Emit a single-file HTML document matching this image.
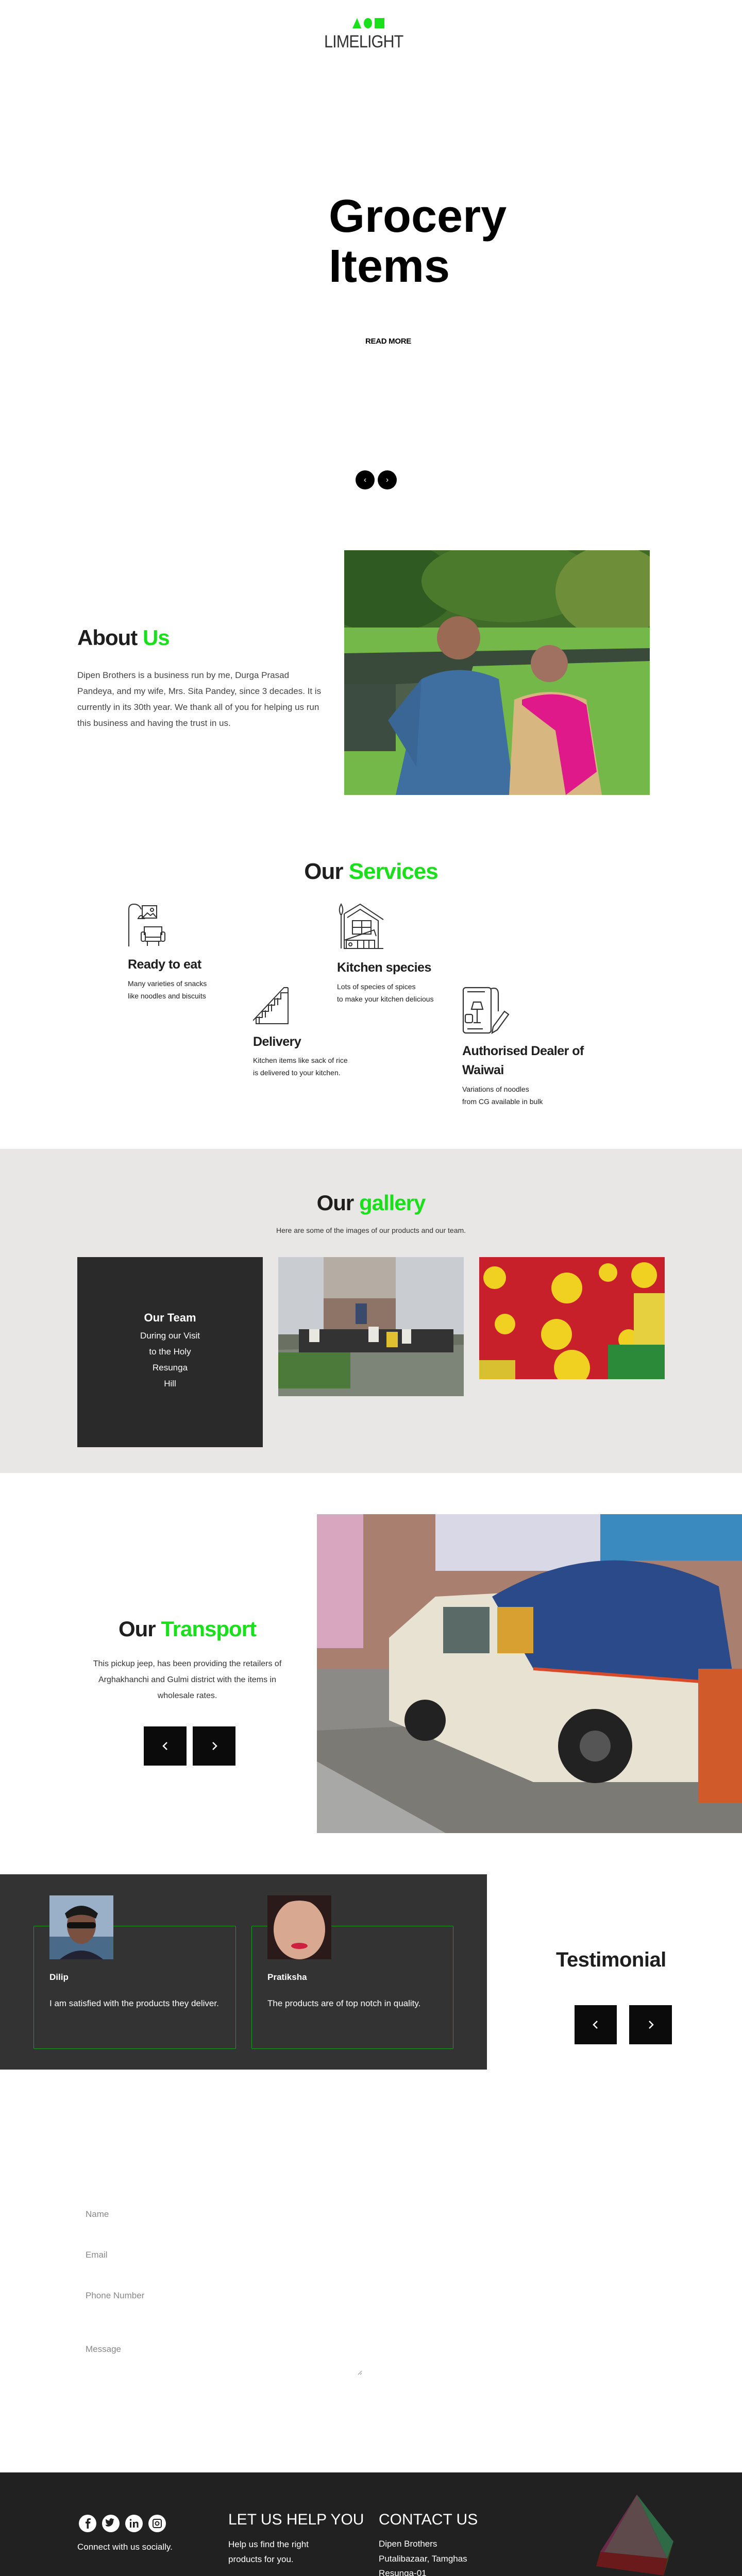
<!DOCTYPE html>
<html><head><meta charset="utf-8">
<style>
*{margin:0;padding:0;box-sizing:border-box}
html,body{width:1440px;height:5162px;overflow:hidden}
body{position:relative;background:#fff;font-family:"Liberation Sans",sans-serif;color:#222}
.a{position:absolute}
.g{color:#19e01a}
.h{font-weight:bold;color:#1e1e1e}
.btn{position:absolute;background:#0b0b0b;color:#fff;display:flex;align-items:center;justify-content:center}
</style></head><body>

<!-- logo -->
<svg class="a" style="left:684px;top:34px" width="62" height="22" viewBox="0 0 62 22">
<polygon points="0,21 9,1 17,21" fill="#19e01a"/>
<ellipse cx="30" cy="11" rx="8" ry="10" fill="#19e01a"/>
<rect x="43" y="1" width="19" height="20" fill="#19e01a"/>
</svg>
<div class="a" style="left:629px;top:62px;width:182px;font-size:34px;color:#333;letter-spacing:-1px;transform:scaleX(0.9);transform-origin:left">LIMELIGHT</div>

<!-- hero -->
<div class="a" style="left:638px;top:372px;font-size:90px;font-weight:bold;line-height:97px;color:#000">Grocery<br>Items</div>
<div class="a" style="left:709px;top:654px;font-size:15px;font-weight:bold;color:#000;letter-spacing:-0.3px">READ MORE</div>
<div class="a" style="left:690px;top:913px;width:37px;height:37px;border-radius:50%;background:#000;color:#fff;font-size:16px;text-align:center;line-height:37px">&#8249;</div>
<div class="a" style="left:733px;top:913px;width:37px;height:37px;border-radius:50%;background:#000;color:#fff;font-size:16px;text-align:center;line-height:37px">&#8250;</div>

<!-- about -->
<div class="a h" style="left:150px;top:1214px;font-size:42px;letter-spacing:-1px">About <span class="g">Us</span></div>
<div class="a" style="left:150px;top:1295px;width:485px;font-size:17px;line-height:31px;color:#444;font-weight:300">Dipen Brothers is a business run by me, Durga Prasad Pandeya, and my wife, Mrs. Sita Pandey, since 3 decades. It is currently in its 30th year. We thank all of you for helping us run this business and having the trust in us.</div>
<svg class="a" style="left:668px;top:1068px" width="593" height="475" viewBox="0 0 593 475">
<rect width="593" height="475" fill="#5d9a3a"/>
<rect width="593" height="160" fill="#3f6a28"/>
<ellipse cx="80" cy="70" rx="140" ry="90" fill="#2f5a22"/>
<ellipse cx="320" cy="60" rx="170" ry="80" fill="#4c7a2c"/>
<ellipse cx="520" cy="80" rx="110" ry="90" fill="#6e8e3a"/>
<rect y="150" width="593" height="325" fill="#75b84a"/>
<path d="M0 200 L593 190 L593 215 L250 225 L240 260 L0 260Z" fill="#3a4a3a"/>
<rect y="260" width="100" height="130" fill="#3c4c40"/>
<path d="M100 260 L300 250 L300 300 L100 320Z" fill="#4d5e4a"/>
<circle cx="222" cy="170" r="42" fill="#9a6a55"/>
<path d="M150 250 Q222 215 300 250 L330 475 L100 475 Z" fill="#3f6fa0"/>
<path d="M85 330 L150 250 L140 420 Z" fill="#3a6696"/>
<circle cx="398" cy="220" r="36" fill="#a07060"/>
<path d="M330 290 Q400 260 470 290 L500 475 L320 475Z" fill="#d8b680"/>
<path d="M345 290 Q420 265 470 300 L490 430 L430 475 L410 350 Q370 320 345 300Z" fill="#e0198a"/>
</svg>

<!-- services -->
<div class="a h" style="left:0;width:1440px;text-align:center;top:1667px;font-size:44px;letter-spacing:-1px">Our <span class="g">Services</span></div>
<svg class="a" style="left:248px;top:1753px" width="88" height="85" viewBox="0 0 88 85" fill="none" stroke="#333" stroke-width="2">
<path d="M2 84 V12 Q2 2 12 2 Q22 2 26 12"/><path d="M20 30 Q26 18 32 30Z"/><rect x="28" y="5" width="28" height="24"/><path d="M30 27 l8-8 6 5 5-4 6 7"/><circle cx="47" cy="13" r="3"/>
<path d="M32 62 V46 h34 V62"/><rect x="26" y="56" width="8" height="18" rx="3"/><rect x="64" y="56" width="8" height="18" rx="3"/><path d="M34 66 h30 M34 74 h30 M38 74 v9 M60 74 v9"/>
</svg>
<svg class="a" style="left:654px;top:1753px" width="92" height="90" viewBox="0 0 92 90" fill="none" stroke="#333" stroke-width="2">
<path d="M15 20 L45 2 L90 32 M20 28 L45 12 L80 34 V88 M14 20 V88 H90"/><rect x="30" y="34" width="36" height="26"/><path d="M48 34 v26 M30 47 h36"/><path d="M14 72 l58 -20 4 12"/><rect x="18" y="72" width="55" height="16"/><circle cx="26" cy="80" r="3"/><path d="M40 72 v16 M52 72 v16 M62 72 v16"/><path d="M7 22 Q2 12 8 2 Q14 12 9 22 Z M8 22 V88"/>
</svg>
<svg class="a" style="left:491px;top:1915px" width="70" height="74" viewBox="0 0 70 74" fill="none" stroke="#333" stroke-width="2">
<path d="M0 66 L60 2 H68 M68 2 V72 H6 V60 H18 V48 H30 V36 H42 V24 H54 V12 H68"/><path d="M12 58 v14 M24 46 v14 M36 34 v14 M48 22 v14"/>
</svg>
<svg class="a" style="left:897px;top:1915px" width="92" height="92" viewBox="0 0 92 92" fill="none" stroke="#333" stroke-width="2.2">
<rect x="2" y="2" width="54" height="88" rx="5"/><path d="M56 4 Q70 0 70 14 V48"/><path d="M10 10 h34 M10 82 h30"/><path d="M22 30 h14 l4 14 h-22 z M29 44 v26 M22 70 h14"/><rect x="6" y="54" width="14" height="16" rx="3"/><path d="M60 78 l22 -30 8 6 -22 30 -10 6 z"/>
</svg>
<div class="a h" style="left:248px;top:1858px;font-size:25px;letter-spacing:-0.5px">Ready to eat</div>
<div class="a" style="left:248px;top:1897px;font-size:14px;line-height:24px">Many varieties of snacks<br>like noodles and biscuits</div>
<div class="a h" style="left:654px;top:1864px;font-size:25px;letter-spacing:-0.5px">Kitchen species</div>
<div class="a" style="left:654px;top:1903px;font-size:14px;line-height:24px">Lots of species of spices<br>to make your kitchen delicious</div>
<div class="a h" style="left:491px;top:2008px;font-size:25px;letter-spacing:-0.5px">Delivery</div>
<div class="a" style="left:491px;top:2046px;font-size:14px;line-height:24px">Kitchen items like sack of rice<br>is delivered to your kitchen.</div>
<div class="a h" style="left:897px;top:2022px;font-size:25px;line-height:37px;letter-spacing:-0.5px">Authorised Dealer of<br>Waiwai</div>
<div class="a" style="left:897px;top:2102px;font-size:14px;line-height:24px">Variations of noodles<br>from CG available in bulk</div>

<!-- gallery -->
<div class="a" style="left:0;top:2230px;width:1440px;height:629px;background:#e8e7e5"></div>
<div class="a h" style="left:0;width:1440px;text-align:center;top:2311px;font-size:42px;letter-spacing:-1px">Our <span class="g">gallery</span></div>
<div class="a" style="left:0;width:1440px;text-align:center;top:2380px;font-size:14px;color:#333">Here are some of the images of our products and our team.</div>
<div class="a" style="left:150px;top:2440px;width:360px;height:369px;background:#2a2a2a;color:#fff;text-align:center">
<div style="margin-top:105px;font-size:22px;font-weight:bold">Our Team</div>
<div style="margin-top:6px;font-size:17px;line-height:31px">During our Visit<br>to the Holy<br>Resunga<br>Hill</div></div>
<svg class="a" style="left:540px;top:2440px" width="360" height="270" viewBox="0 0 360 270">
<rect width="360" height="270" fill="#c9ccd0"/><rect x="88" y="0" width="140" height="130" fill="#b5aca4"/><rect x="88" y="80" width="140" height="60" fill="#8e7466"/>
<rect y="150" width="360" height="120" fill="#6a7062"/><path d="M0 180 L360 170 L360 270 L0 270Z" fill="#7d8478"/><rect y="185" width="140" height="70" fill="#4c7a3a"/>
<g fill="#333"><rect x="40" y="140" width="300" height="45"/></g>
<g fill="#e8e8e0"><rect x="60" y="140" width="20" height="25"/><rect x="175" y="135" width="20" height="30"/><rect x="240" y="140" width="18" height="28"/></g>
<rect x="210" y="145" width="22" height="30" fill="#e0c030"/><rect x="150" y="90" width="22" height="40" fill="#3a4a6a"/>
</svg>
<svg class="a" style="left:930px;top:2440px" width="360" height="237" viewBox="0 0 360 237">
<rect width="360" height="237" fill="#c8202a"/>
<g fill="#f0d020"><circle cx="30" cy="40" r="22"/><circle cx="170" cy="60" r="30"/><circle cx="250" cy="30" r="18"/><circle cx="320" cy="35" r="25"/><circle cx="150" cy="150" r="30"/><circle cx="50" cy="130" r="20"/><circle cx="180" cy="215" r="35"/><circle cx="290" cy="160" r="20"/></g>
<rect x="300" y="70" width="60" height="100" fill="#e6d040"/><rect x="250" y="170" width="110" height="67" fill="#2a8a3a"/><rect x="0" y="200" width="70" height="37" fill="#d8c030"/>
</svg>

<!-- transport -->
<div class="a h" style="left:0;width:727px;text-align:center;top:3138px;font-size:42px;letter-spacing:-1px">Our <span class="g">Transport</span></div>
<div class="a" style="left:160px;width:407px;text-align:center;top:3214px;font-size:16px;line-height:31px;color:#333">This pickup jeep, has been providing the retailers of Arghakhanchi and Gulmi district with the items in wholesale rates.</div>
<div class="btn" style="left:279px;top:3351px;width:83px;height:76px"><svg width="14" height="20" viewBox="0 0 14 20"><path d="M10 3 L3 10 L10 17" stroke="#fff" stroke-width="2.5" fill="none"/></svg></div>
<div class="btn" style="left:374px;top:3351px;width:83px;height:76px"><svg width="14" height="20" viewBox="0 0 14 20"><path d="M4 3 L11 10 L4 17" stroke="#fff" stroke-width="2.5" fill="none"/></svg></div>
<svg class="a" style="left:615px;top:2939px" width="825" height="619" viewBox="0 0 825 619">
<rect width="825" height="619" fill="#8b8a86"/><rect width="825" height="300" fill="#a98070"/><rect x="0" y="0" width="90" height="260" fill="#d9a6c0"/><rect x="230" y="0" width="320" height="110" fill="#d8d8e6"/><rect x="550" y="0" width="275" height="90" fill="#3a8ac0"/>
<path d="M0 420 L825 380 L825 619 L0 619Z" fill="#7b7a74"/><path d="M0 480 L250 619 L0 619Z" fill="#a8a8a6"/>
<path d="M140 240 L230 160 L420 150 L440 300 L770 320 L810 420 L780 520 L420 520 L140 400 Z" fill="#e8e2d2"/>
<path d="M340 160 Q560 30 780 140 L810 330 L420 300 Z" fill="#2b4a8a"/>
<path d="M420 300 L810 330" stroke="#d84a2a" stroke-width="6"/>
<rect x="740" y="300" width="85" height="260" fill="#d05a2a"/>
<circle cx="210" cy="400" r="40" fill="#222"/><circle cx="540" cy="450" r="72" fill="#222"/><circle cx="540" cy="450" r="30" fill="#555"/>
<rect x="245" y="180" width="90" height="90" fill="#5a6a66"/><rect x="350" y="180" width="70" height="90" fill="#d8a030"/>
</svg>

<!-- testimonial -->
<div class="a" style="left:0;top:3638px;width:945px;height:379px;background:#333"></div>
<div class="a" style="left:65px;top:3738px;width:393px;height:239px;border:1px solid #19a01a;border-radius:2px"></div>
<div class="a" style="left:488px;top:3738px;width:392px;height:239px;border:1px solid #19a01a;border-radius:2px"></div>
<svg class="a" style="left:96px;top:3679px" width="124" height="124" viewBox="0 0 124 124"><rect width="124" height="124" fill="#9ab0c8"/><rect y="80" width="124" height="44" fill="#4a6a8a"/><ellipse cx="62" cy="58" rx="28" ry="36" fill="#7a5040"/><path d="M30 35 Q62 5 94 35 L90 45 Q62 30 34 45Z" fill="#1a1a1a"/><rect x="34" y="52" width="56" height="12" rx="5" fill="#111"/><path d="M20 124 Q62 90 104 124Z" fill="#223"/></svg>
<svg class="a" style="left:519px;top:3679px" width="124" height="124" viewBox="0 0 124 124"><rect width="124" height="124" fill="#2a1a1a"/><ellipse cx="62" cy="66" rx="50" ry="58" fill="#d8a890"/><path d="M10 30 Q62 -10 114 30 L114 0 L10 0Z" fill="#2a1a1a"/><ellipse cx="62" cy="98" rx="16" ry="6" fill="#d02040"/></svg>
<div class="a" style="left:96px;top:3828px;font-size:17px;font-weight:bold;color:#fff">Dilip</div>
<div class="a" style="left:96px;top:3874px;width:330px;font-size:17px;line-height:29px;color:#fff">I am satisfied with the products they deliver.</div>
<div class="a" style="left:519px;top:3828px;font-size:17px;font-weight:bold;color:#fff">Pratiksha</div>
<div class="a" style="left:519px;top:3874px;width:330px;font-size:17px;line-height:29px;color:#fff">The products are of top notch in quality.</div>
<div class="a h" style="left:1079px;top:3782px;font-size:40px;letter-spacing:-0.5px">Testimonial</div>
<div class="btn" style="left:1115px;top:3892px;width:82px;height:76px"><svg width="14" height="20" viewBox="0 0 14 20"><path d="M10 3 L3 10 L10 17" stroke="#fff" stroke-width="2.5" fill="none"/></svg></div>
<div class="btn" style="left:1221px;top:3892px;width:83px;height:76px"><svg width="14" height="20" viewBox="0 0 14 20"><path d="M4 3 L11 10 L4 17" stroke="#fff" stroke-width="2.5" fill="none"/></svg></div>

<!-- form -->
<div class="a" style="left:166px;top:4288px;font-size:17px;color:#888">Name</div>
<div class="a" style="left:166px;top:4367px;font-size:17px;color:#888">Email</div>
<div class="a" style="left:166px;top:4446px;font-size:17px;color:#888">Phone Number</div>
<div class="a" style="left:166px;top:4550px;font-size:17px;color:#888">Message</div>
<svg class="a" style="left:694px;top:4601px" width="9" height="9" viewBox="0 0 9 9"><path d="M8 1 L1 8 M8 5 L5 8" stroke="#888"/></svg>

<!-- footer -->
<div class="a" style="left:0;top:4799px;width:1440px;height:298px;background:#212121"></div>
<svg class="a" style="left:152px;top:4880px" width="172" height="36" viewBox="0 0 172 36">
<g fill="#fff"><circle cx="18" cy="18" r="17"/><circle cx="63" cy="18" r="17"/><circle cx="108" cy="18" r="17"/><circle cx="153" cy="18" r="17"/></g>
<path d="M20 28 V18 h3 l.5-3.5 H20 v-2 q0-1.5 1.5-1.5 H24 V8 h-3 q-4.5 0-4.5 4.5 v2 H14 V18 h2.5 v10z" fill="#212121"/>
<path d="M54 23 q4 2 8 0 q6-3 6-11 l2-2 -2 .5 1-2 -2 1 q-3-3-6 0 q-1 1.5-.5 3 q-4 0-7-3 q-1.5 3 1 5 l-1.5-.5 q0 2.5 2.5 3.5 h-1.5 q1 2 3.5 2 q-2 1.5-5 1z" fill="#212121"/>
<g fill="#212121"><rect x="100" y="15" width="3" height="11"/><circle cx="101.5" cy="11" r="1.8"/><path d="M106 15 h3 v1.5 q1.5-2 4-2 q3.5 0 3.5 4 V26 h-3 v-7 q0-2-1.8-2 q-2.2 0-2.2 2.5 V26 h-3.5z"/></g>
<rect x="145" y="10" width="16" height="16" rx="3" fill="none" stroke="#212121" stroke-width="2"/><circle cx="153" cy="18" r="3.5" fill="none" stroke="#212121" stroke-width="2"/>
</svg>
<div class="a" style="left:150px;top:4934px;font-size:17px;color:#fff">Connect with us socially.</div>
<div class="a" style="left:443px;top:4874px;font-size:30px;color:#fff;font-weight:300">LET US HELP YOU</div>
<div class="a" style="left:443px;top:4924px;font-size:17px;line-height:29px;color:#fff">Help us find the right<br>products for you.</div>
<div class="a" style="left:735px;top:4874px;font-size:30px;color:#fff;font-weight:300">CONTACT US</div>
<div class="a" style="left:735px;top:4924px;font-size:17px;line-height:28.7px;color:#fff">Dipen Brothers<br>Putalibazaar, Tamghas<br>Resunga-01<br>Nepal</div>
<svg class="a" style="left:1155px;top:4841px" width="152" height="160" viewBox="0 0 152 160">
<polygon points="81,1 10,112 140,125" fill="#5e4a4a"/>
<polygon points="81,1 140,125 152,92" fill="#2d6a45"/>
<polygon points="81,1 2,140 10,112" fill="#6a2a4a"/>
<polygon points="10,112 140,125 133,158 2,140" fill="#6a1a1a"/>
<polygon points="140,125 152,92 133,158" fill="#3e3e1a"/>
</svg>
<div class="a" style="left:0;width:1440px;text-align:center;top:5124px;font-size:17px;color:#111">© 2019 All Rights Reserved. Design by Html Templates. Developed by Dipen Pandey</div>
</body></html>
